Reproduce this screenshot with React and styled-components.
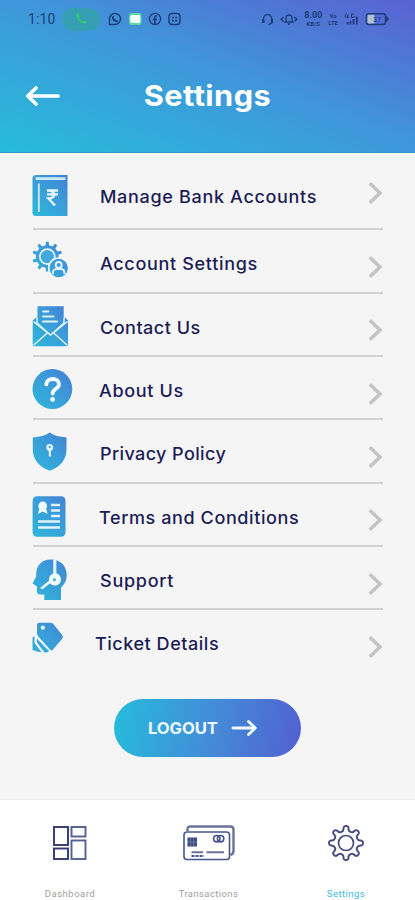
import React from 'react';
import styled, { createGlobalStyle } from 'styled-components';

const color = {
  teal: '#26bcdc',
  blue: '#4095d9',
  violet: '#5a61d2',
  navy: '#1b1c55',
  status: '#1d3c78',
  page: '#f5f5f5',
  line: '#d2d2d2',
  chevron: '#c4c4c4',
  muted: '#a0a0a0',
};

const GlobalStyle = createGlobalStyle`
  * {
    box-sizing: border-box;
  }
  body {
    margin: 0;
    background: ${color.page};
    font-family: Inter, 'Open Sans', sans-serif;
  }
`;

const Screen = styled.div`
  width: 415px;
  height: 900px;
  display: flex;
  flex-direction: column;
  overflow: hidden;
  background: ${color.page};
`;

const Header = styled.header`
  height: 153px;
  border-bottom: 1px solid #2a9fc4;
  background: linear-gradient(
    to top right,
    ${color.teal},
    ${color.blue} 54%,
    ${color.violet}
  );
`;

const StatusBar = styled.div`
  height: 38px;
  padding: 0 26px 0 28px;
  display: flex;
  align-items: center;
  justify-content: space-between;
  color: ${color.status};
`;

const StatusGroup = styled.div`
  display: flex;
  align-items: center;
  gap: ${(props) => props.$gap}px;
`;

const Clock = styled.span`
  width: 28px;
  font: 400 14px Roboto, sans-serif;
  letter-spacing: 0.1px;
`;

const CallPill = styled.span`
  width: 38px;
  height: 23px;
  margin: 0 2px 0 0;
  border-radius: 12px;
  display: flex;
  align-items: center;
  justify-content: center;
  background: #379fb4;
`;

const Stacked = styled.span`
  display: flex;
  flex-direction: column;
  align-items: center;
  font: 700 6px/7px Roboto, sans-serif;

  span:first-child {
    font-size: ${(props) => props.$top || 6}px;
    line-height: ${(props) => props.$top || 7}px;
  }
`;

const TitleBar = styled.div`
  height: 115px;
  padding: 0 25px;
  display: grid;
  grid-template-columns: 36px 1fr 36px;
  align-items: center;
`;

const Title = styled.h1`
  margin: 0;
  text-align: center;
  color: #fff;
  font-size: 29px;
  font-weight: 700;
  letter-spacing: 0.4px;
  transform: scaleX(1.06);
`;

const List = styled.ul`
  margin: 0;
  padding: 0 32px 0 33px;
  list-style: none;
`;

const Row = styled.li`
  height: ${(props) => (props.$first ? 77.4 : 63.35)}px;
  padding-top: ${(props) => (props.$first ? 22 : 12)}px;
  display: grid;
  grid-template-columns: ${(props) => props.$indent}px 1fr 16px;
  align-items: start;
  border-bottom: 2px solid ${color.line};

  &:last-child {
    border-bottom-color: transparent;
  }
`;

const RowIcon = styled.svg`
  display: block;
  width: 42px;
  height: 42px;
  overflow: visible;
`;

const RowLabel = styled.span`
  padding-top: 11px;
  color: ${color.navy};
  font-size: 17px;
  line-height: 22px;
  font-weight: 500;
  letter-spacing: ${(props) => props.$spacing}px;
  white-space: nowrap;
  transform: scaleX(1.06);
  transform-origin: left;
`;

const Chevron = styled.svg`
  display: block;
  width: 16px;
  height: 24px;
  margin-top: ${(props) => (props.$first ? 6 : 12.5)}px;
`;

const LogoutButton = styled.button`
  width: 187px;
  height: 58px;
  margin: 25px 0 0 114px;
  padding: 0 0 0 34px;
  flex: none;
  display: flex;
  align-items: center;
  gap: 13px;
  border: none;
  border-radius: 29px;
  color: #eefaff;
  background: linear-gradient(
    100deg,
    ${color.teal},
    #4589d7 55%,
    #5260d2
  );
  font: 700 16px Inter, sans-serif;
`;

const LogoutText = styled.span`
  width: 70px;
  padding-top: 1px;
  letter-spacing: -0.1px;
  text-align: left;
  white-space: nowrap;
  transform: scaleX(1.04);
  transform-origin: left;
`;

const TabBar = styled.nav`
  height: 101px;
  margin-top: auto;
  flex: none;
  display: grid;
  grid-template-columns: 140px 137px 138px;
  background: #fff;
  border-top: 1px solid #ededed;
`;

const Tab = styled.div`
  display: flex;
  flex-direction: column;
  align-items: center;
  padding-top: 24px;
  color: ${(props) => (props.$active ? '#41b7de' : color.muted)};
  font: 400 9.5px/12px Roboto, sans-serif;
  letter-spacing: ${(props) => props.$spacing}px;

  svg {
    display: block;
    height: 38px;
    margin-bottom: 26px;
  }
`;

const cogPoints = (cx, cy, outer, inner, teeth, top, base) => {
  const step = (Math.PI * 2) / teeth;
  const at = (r, a) => [cx + r * Math.sin(a), cy - r * Math.cos(a)];
  const points = [];
  for (let i = 0; i < teeth; i++) {
    const a = i * step;
    points.push(
      at(inner, a - step * base),
      at(outer, a - step * top),
      at(outer, a + step * top),
      at(inner, a + step * base)
    );
  }
  return points;
};

const cogPath = (...args) => `M${cogPoints(...args).join('L')}Z`;

// same cog, with each corner turned into a curve
const roundCogPath = (...args) => {
  const points = cogPoints(...args);
  const mid = (i) => {
    const a = points[i % points.length];
    const b = points[(i + 1) % points.length];
    return [(a[0] + b[0]) / 2, (a[1] + b[1]) / 2];
  };
  return `M${mid(points.length - 1)}${points
    .map((p, i) => `Q${p} ${mid(i)}`)
    .join('')}Z`;
};

const fill = 'url(#iconFill)';

const HiddenSvg = styled.svg`
  position: absolute;
  width: 0;
  height: 0;
`;

const GradientDefs = () => (
  <HiddenSvg>
    <defs>
      <linearGradient
        id='iconFill'
        gradientUnits='userSpaceOnUse'
        x1='0'
        y1='36'
        x2='36'
        y2='0'
      >
        <stop offset='0' stopColor='#2db5da' />
        <stop offset='0.55' stopColor='#3c9ad9' />
        <stop offset='1' stopColor='#457fd4' />
      </linearGradient>
    </defs>
  </HiddenSvg>
);

const BookIcon = () => (
  <>
    <path
      d='M3 0H34.5V41H3Q-.5 41-.5 37.5V3.5Q-.5 0 3 0Z'
      fill={fill}
    />
    <path d='M3 2.2H32.5V5H3Q1.5 3.6 3 2.2Z' fill='#cdeaf8' />
    <path d='M5.8 8.5V37' stroke='#d9f1fb' strokeWidth='1.7' />
    <path
      d='M14 15.5H25M14 19.4H25M14.5 15.7C23.5 15 23 23.8 15.5 23.5L22 30.5'
      fill='none'
      stroke='#e8f7fd'
      strokeWidth='2.4'
    />
  </>
);

const AccountIcon = () => (
  <>
    <path
      d={cogPath(14.3, 14.6, 15, 11.4, 10, 0.15, 0.24)}
      fill={fill}
    />
    <circle cx='14.3' cy='14.6' r='7.5' fill='#43a8db' stroke='#e5f4fb' strokeWidth='1.7' />
    <circle cx='25.7' cy='26' r='10' fill={fill} stroke={color.page} strokeWidth='1.6' />
    <circle cx='25.7' cy='23' r='3' fill='none' stroke='#e8f7fd' strokeWidth='1.8' />
    <path
      d='M20 32V30.5Q20 27.2 23.5 27.2H28Q31.4 27.2 31.4 30.5V32'
      fill='none'
      stroke='#e8f7fd'
      strokeWidth='1.8'
    />
  </>
);

const MailIcon = () => (
  <>
    <path
      d='M4.5 .2H30.7V12.5L32 11.5L35 14.5V38.5Q35 40.3 33 40.3H1.5Q-.3 40.3-.3 38.5V14.5L3 11.5L4.5 12.5Z'
      fill={fill}
    />
    <path
      d='M10 5.5H15.5M10 10.5H20.5M10 15.5H24'
      stroke='#dff3fc'
      strokeWidth='1.9'
      strokeLinecap='round'
    />
    <path
      d='M4 12V17L17.5 29L31 17V12M.3 15.5L17.5 29L34.5 15.5M.8 39L14.3 27M34 39L20.7 27'
      fill='none'
      stroke='#e2f5fc'
      strokeWidth='1.5'
    />
  </>
);

const HelpIcon = () => (
  <>
    <circle cx='19.4' cy='20' r='19.9' fill={fill} />
    <path
      d='M13.3 15.4C13.5 8.1 26 8.2 26 15.2C26 19.8 19.6 19.8 19.6 24.6'
      fill='none'
      stroke='#f4fcff'
      strokeWidth='3.9'
      strokeLinecap='round'
    />
    <circle cx='19.6' cy='30.4' r='2.4' fill='#f4fcff' />
  </>
);

const ShieldIcon = () => (
  <>
    <path
      d='M16.7 .6Q23 5 33.5 5.4V17Q33.5 32.5 16.7 38.8Q-.2 32.5-.2 17V5.4Q10.5 5 16.7 .6Z'
      fill={fill}
    />
    <circle cx='16.7' cy='15.5' r='3.4' fill='#dff3fc' />
    <circle cx='16.7' cy='15' r='1.1' fill='#3c9ad9' />
    <path d='M16.9 17V24.5' stroke='#dff3fc' strokeWidth='2.2' />
  </>
);

const TermsIcon = () => (
  <>
    <rect x='-.4' y='.2' width='32.9' height='40.6' rx='4.5' fill={fill} />
    <circle cx='9.7' cy='10' r='4.4' fill='#f2fbff' />
    <path d='M6.5 12L4.8 18L9.7 15.4L14.6 18L12.9 12Z' fill='#f2fbff' />
    <path
      d='M18 9H27M18 14.5H27M18 20H27M5 25.5H27M5 31.5H27'
      stroke='#dff3fc'
      strokeWidth='2.4'
    />
  </>
);

const SupportIcon = () => (
  <>
    <path
      d='M17.7 .5C28 .5 33.7 7.5 33.7 16C33.7 22 31.5 25 28 28.5V41H11.3V35.5H7Q4 35.5 4 32.5V27.5L-.5 24.5L3.2 17.5V15C3.2 6.5 9 .5 17.7 .5Z'
      fill={fill}
    />
    <path d='M21.8 .8V17' stroke='#dff3fc' strokeWidth='3.2' />
    <path
      d='M22.3 14.2A6.2 6.2 0 1 1 17 24.3L9.5 30.2L7 28.9L16 21.8A6.4 6.4 0 0 1 22.3 14.2Z'
      fill='#f2fbff'
    />
    <circle cx='21.4' cy='20.8' r='1.8' fill='#5cbce4' />
  </>
);

const TicketIcon = () => (
  <>
    <path d='M6 .8H17Q19 .8 20.3 2L29 12.8Q30.8 15 29 17L20 27.5Q18.5 29.5 17 27.5L5.3 14.5Q4 13 4 11V3Q4 .8 6 .8Z' fill={fill} />
    <circle cx='9.8' cy='5.7' r='2.1' fill='#e8f7fd' />
    <path d='M4 16.8L16.2 29.3Q14.5 30.8 11.5 30.5L4 20.5Z' fill={fill} />
    <path d='M1.5 14V21L8.8 30.4L4 29.6L-.5 28V15.5Z' fill={fill} />
  </>
);

const rows = [
  { label: 'Manage Bank Accounts', Icon: BookIcon, indent: 67, spacing: 0.63 },
  { label: 'Account Settings', Icon: AccountIcon, indent: 67, spacing: 0.63 },
  { label: 'Contact Us', Icon: MailIcon, indent: 66.5, spacing: 0.46 },
  { label: 'About Us', Icon: HelpIcon, indent: 66, spacing: 0.62 },
  { label: 'Privacy Policy', Icon: ShieldIcon, indent: 66.5, spacing: 0.36 },
  { label: 'Terms and Conditions', Icon: TermsIcon, indent: 66, spacing: 0.56 },
  { label: 'Support', Icon: SupportIcon, indent: 66.5, spacing: 0.7 },
  { label: 'Ticket Details', Icon: TicketIcon, indent: 62, spacing: 0.5 },
];

const SettingsRow = ({ row, first }) => (
  <Row $first={first} $indent={row.indent}>
    <RowIcon viewBox='0 0 42 42'>
      <row.Icon />
    </RowIcon>
    <RowLabel $spacing={row.spacing}>{row.label}</RowLabel>
    <Chevron $first={first} viewBox='0 0 16 24'>
      <path
        d='M2.8 2.2L13 12L2.8 21.8'
        fill='none'
        stroke={color.chevron}
        strokeWidth='3.5'
      />
    </Chevron>
  </Row>
);

const PhoneStatus = () => (
  <StatusBar>
    <StatusGroup $gap={6}>
      <Clock>1:10</Clock>
      <CallPill>
        <svg width='14' height='14' viewBox='0 0 14 14'>
          <path
            d='M2.5 1.5C2 7 6.5 12 12 11.5L12.3 9.5L9.5 8.5L8.3 9.4C6.5 8.5 5.3 7 4.7 5.4L5.5 4.2L4.4 1.3Z'
            fill='#2fce70'
          />
        </svg>
      </CallPill>
      <svg width='73' height='14' viewBox='0 0 73 14' fill='none' stroke='currentColor'>
        <path d='M1.5 12.5V7A5.5 5.5 0 1 1 7 12.5Z' strokeWidth='1.4' />
        <path d='M4.8 4.3C4.8 7.5 6.5 9.2 9.7 9.4' strokeWidth='2' />
        <rect x='21' y='1' width='12.5' height='12' rx='2.5' fill='#5ed6a4' stroke='none' />
        <rect x='22.3' y='3' width='10' height='8' rx='2' fill='#f4fff8' stroke='none' />
        <circle cx='47' cy='7' r='5.6' strokeWidth='1.3' />
        <path d='M49 4H48Q46.8 4 46.8 5.5V12M44.8 7.5H49' strokeWidth='1.7' />
        <rect x='61' y='1.5' width='11' height='11' rx='3' strokeWidth='1.4' />
        <path d='M64 5.5H69.2M64 8.7H69.2' strokeWidth='1.7' strokeDasharray='2 1.2' />
      </svg>
    </StatusGroup>
    <StatusGroup $gap={6}>
      <svg width='13' height='14' viewBox='0 0 13 14' fill='none' stroke='currentColor'>
        <path d='M2.5 11V6A4.2 4.2 0 0 1 10.7 6V11L7.5 12.7' strokeWidth='1.3' />
        <path d='M2.3 7V11M10.9 7V11' strokeWidth='2.2' />
      </svg>
      <svg width='18' height='14' viewBox='0 0 18 14' fill='none' stroke='currentColor'>
        <path d='M5 10H13L12 8.5V6A3 3 0 0 0 6 6V8.5ZM8 12H10' strokeWidth='1.3' />
        <path d='M3.5 5L1.2 7.2L3.5 9.5M14.5 5L16.8 7.2L14.5 9.5' strokeWidth='1.4' />
      </svg>
      <Stacked $top={9}>
        <span>8.00</span>
        <span>KB/S</span>
      </Stacked>
      <Stacked>
        <span>Vo</span>
        <span>LTE</span>
      </Stacked>
      <svg width='15' height='14' viewBox='0 0 15 14' fill='none' stroke='currentColor'>
        <path d='M2.5 1.5L1 5H4.5M3.8 3V6.5M10 2H7.5V5.5H10V4' />
        <path d='M3.5 12.5V10M6.5 12.5V9M9.5 12.5V7M12.8 12.5V4.5' strokeWidth='1.8' />
      </svg>
      <svg width='24' height='14' viewBox='0 0 24 14'>
        <rect x='1.5' y='1.8' width='19' height='10.6' rx='2.5' fill='none' stroke='currentColor' strokeWidth='1.5' />
        <rect x='2.5' y='2.8' width='7' height='8.6' rx='1.2' fill='#b3c0d2' />
        <path d='M21.5 4.5L23.5 7L21.5 9.5Z' fill='currentColor' stroke='currentColor' />
        <text x='8' y='9.6' fontSize='7' fontFamily='Roboto' fill='currentColor'>37</text>
      </svg>
    </StatusGroup>
  </StatusBar>
);

const Tabs = () => (
  <TabBar>
    <Tab $spacing={0.5}>
      <svg width='38' viewBox='0 0 38 38' fill='none' stroke='#343873' strokeWidth='1.9'>
        <rect x='3' y='3' width='14' height='18' />
        <rect x='20.5' y='3' width='14' height='9.5' stroke='#51608f' />
        <rect x='3' y='24.5' width='14' height='10.5' />
        <rect x='20.5' y='16.5' width='14' height='18.5' stroke='#51608f' />
      </svg>
      Dashboard
    </Tab>
    <Tab $spacing={0.4}>
      <svg width='54' viewBox='0 0 54 38' fill='none' stroke='#46548a' strokeWidth='1.6'>
        <path d='M5.5 7V5.5Q5.5 2.5 8.5 2.5H48Q51.5 2.5 51.5 5.5V27Q51.5 30 48.5 31' stroke='#6c7297' strokeWidth='2.4' />
        <rect x='2' y='8' width='45.5' height='27.5' rx='3' fill='#fff' />
        <rect x='5.5' y='13.5' width='9.5' height='9' fill='#3d4a83' stroke='none' />
        <path d='M8.7 13.5V22.5M11.8 13.5V22.5M5.5 18H15' stroke='#7d88b2' strokeWidth='.7' />
        <circle cx='34.8' cy='14.7' r='3.2' />
        <circle cx='38.6' cy='14.7' r='3.2' />
        <path d='M9.5 28.3H21M24.5 28.3H42' stroke='#6a7199' strokeWidth='2' />
        <path d='M9.5 32H22' strokeWidth='2' strokeDasharray='3 1' />
      </svg>
      Transactions
    </Tab>
    <Tab $active $spacing={0.45}>
      <svg width='38' viewBox='0 0 38 38' fill='none' stroke='#454b7c' strokeWidth='1.9' strokeLinejoin='round'>
        <path d={roundCogPath(19, 19, 17.2, 12.2, 8, 0.19, 0.25)} />
        <circle cx='19' cy='19' r='7.5' strokeWidth='1.7' />
      </svg>
      Settings
    </Tab>
  </TabBar>
);

export default function App() {
  return (
    <Screen>
      <GlobalStyle />
      <GradientDefs />
      <Header>
        <PhoneStatus />
        <TitleBar>
          <svg width='36' height='22' viewBox='0 0 36 22' fill='none'>
            <path
              d='M33 11H3M11 3L2.7 11L11 19'
              stroke='#fff'
              strokeWidth='3.7'
              strokeLinecap='round'
              strokeLinejoin='round'
            />
          </svg>
          <Title>Settings</Title>
        </TitleBar>
      </Header>
      <List>
        {rows.map((row, i) => (
          <SettingsRow key={row.label} row={row} first={i === 0} />
        ))}
      </List>
      <LogoutButton>
        <LogoutText>LOGOUT</LogoutText>
        <svg width='27' height='18' viewBox='0 0 27 18' fill='none'>
          <path
            d='M2 9H24M17.5 2.5L24.3 9L17.5 15.5'
            stroke='#eefaff'
            strokeWidth='2.8'
            strokeLinecap='round'
            strokeLinejoin='round'
          />
        </svg>
      </LogoutButton>
      <Tabs />
    </Screen>
  );
}
